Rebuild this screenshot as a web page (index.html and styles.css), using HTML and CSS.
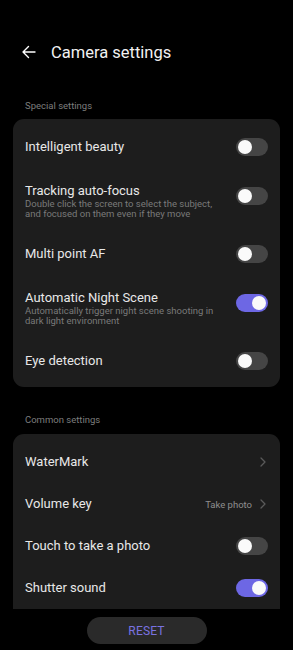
FILE: index.html
```html
<!DOCTYPE html>
<html>
<head>
<meta charset="utf-8">
<link rel="stylesheet" href="styles.css">
</head>
<body>
<div class="screen">
  <header class="header">
    <svg class="back" width="16" height="16" viewBox="0 0 16 16"><path d="M14 8H2M7.5 2.5L2 8l5.5 5.5" fill="none" stroke="#fff" stroke-width="1.4" stroke-linecap="round" stroke-linejoin="round"/></svg>
    <h1 class="title">Camera settings</h1>
  </header>

  <div class="section-label">Special settings</div>
  <div class="card card-1">
    <div class="row"><div class="text"><div class="row-title">Intelligent beauty</div></div><span class="toggle"></span></div>
    <div class="row row-multi"><div class="text"><div class="row-title">Tracking auto-focus</div><div class="row-sub">Double click the screen to select the subject, and focused on them even if they move</div></div><span class="toggle"></span></div>
    <div class="row"><div class="text"><div class="row-title">Multi point AF</div></div><span class="toggle"></span></div>
    <div class="row row-multi"><div class="text"><div class="row-title">Automatic Night Scene</div><div class="row-sub">Automatically trigger night scene shooting in dark light environment</div></div><span class="toggle on"></span></div>
    <div class="row"><div class="text"><div class="row-title">Eye detection</div></div><span class="toggle"></span></div>
  </div>

  <div class="section-label label-2">Common settings</div>
  <div class="card card-2">
    <div class="row"><div class="text"><div class="row-title">WaterMark</div></div><svg class="chev" width="6" height="10" viewBox="0 0 6 10"><path d="M1 1l4 4-4 4" fill="none" stroke="#5a5a5a" stroke-width="1.3" stroke-linecap="round" stroke-linejoin="round"/></svg></div>
    <div class="row"><div class="text"><div class="row-title">Volume key</div></div><span class="value">Take photo</span><svg class="chev" width="6" height="10" viewBox="0 0 6 10"><path d="M1 1l4 4-4 4" fill="none" stroke="#5a5a5a" stroke-width="1.3" stroke-linecap="round" stroke-linejoin="round"/></svg></div>
    <div class="row"><div class="text"><div class="row-title">Touch to take a photo</div></div><span class="toggle"></span></div>
    <div class="row"><div class="text"><div class="row-title">Shutter sound</div></div><span class="toggle on"></span></div>
  </div>

  <div class="footer"><button class="reset">RESET</button></div>
</div>
</body>
</html>
```

FILE: styles.css
```css
* { box-sizing: border-box; margin: 0; padding: 0; }
html, body { background: #000; }
body { font-family: Roboto, "Noto Sans", sans-serif; color: #e6e6e6; width: 293px; height: 650px; overflow: hidden; }
.screen { padding: 34px 13px 0; }
.header { display: flex; align-items: center; height: 36px; padding-left: 8px; gap: 14px; }
.back { flex: none; }
.title { font-size: 16.5px; font-weight: 400; color: #f2f2f2; }
.section-label { font-size: 9.5px; color: #7d7d7d; margin: 29px 0 0 12px; height: 14px; line-height: 14px; }
.label-2 { margin-top: 26px; }
.card { background: #1d1d1d; border-radius: 11px; margin-top: 6px; padding: 7px 12px 5px; }
.card-2 { padding-bottom: 0; border-radius: 11px 11px 0 0; margin-top: 7px; }
.row { display: flex; align-items: center; min-height: 42px; }
.row-multi { min-height: 65px; }
.text { flex: 1; min-width: 0; }
.row-title { font-size: 13px; line-height: 16px; color: #e8e8e8; }
.row-sub { font-size: 9.5px; line-height: 10px; color: #7a7a7a; padding-right: 16px; }
.toggle { flex: none; width: 32px; height: 18px; border-radius: 9px; background: #454545; position: relative; }
.row-multi .toggle { margin-bottom: 9px; }
.toggle::after { content: ""; position: absolute; left: 2px; top: 2px; width: 14px; height: 14px; border-radius: 50%; background: #fafafa; }
.toggle.on { background: #6d67e4; }
.toggle.on::after { left: 16px; }
.value { font-size: 9.5px; color: #8f8f8f; margin-right: 8px; }
.chev { flex: none; margin-right: 2px; }
.footer { display: flex; justify-content: center; padding-top: 8px; }
.reset { width: 120px; height: 27px; border-radius: 14px; border: none; background: #2a2a2a; color: #7a72e0; font-family: Roboto, sans-serif; font-size: 12px; letter-spacing: 0.2px; }
```
